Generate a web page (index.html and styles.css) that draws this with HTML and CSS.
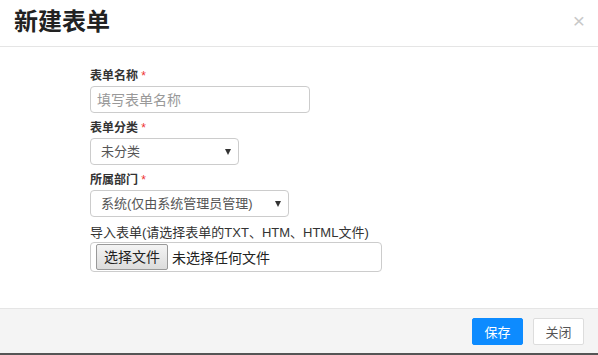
FILE: index.html
```html
<!DOCTYPE html>
<html lang="zh-CN">
<head>
  <meta charset="UTF-8" />
  <title>新建表单</title>
  <link rel="stylesheet" href="styles.css">
</head>
<body>
  <div class="modal">
    <div class="modal-header">
      <h3>新建表单</h3>
      <span class="close">&times;</span>
    </div>
    <div class="modal-body">
      <div class="field">
        <label>表单名称 <em>*</em></label>
        <input class="text-input" type="text" placeholder="填写表单名称">
      </div>
      <div class="field">
        <label>表单分类 <em>*</em></label>
        <div class="select short">未分类<span class="caret"></span></div>
      </div>
      <div class="field">
        <label>所属部门 <em>*</em></label>
        <div class="select wide">系统(仅由系统管理员管理)<span class="caret"></span></div>
      </div>
      <div class="field">
        <label class="plain">导入表单(请选择表单的TXT、HTM、HTML文件)</label>
        <div class="file">
          <span class="file-btn">选择文件</span>
          <span class="file-name">未选择任何文件</span>
        </div>
      </div>
    </div>
    <div class="modal-footer">
      <button class="btn primary">保存</button>
      <button class="btn">关闭</button>
    </div>
  </div>
</body>
</html>
```

FILE: styles.css
```css
* {
  box-sizing: border-box;
  margin: 0;
  padding: 0;
}
body {
  font-family: "Liberation Sans", "Noto Sans CJK SC", sans-serif;
  color: #333;
  background: #fff;
  width: 598px;
  height: 355px;
  overflow: hidden;
}
.modal {
  display: flex;
  flex-direction: column;
  height: 355px;
  border-bottom: 2px solid #555;
}
.modal-header {
  height: 47px;
  border-bottom: 1px solid #e5e5e5;
  display: flex;
  align-items: center;
  justify-content: space-between;
  padding: 0 14px;
}
.modal-header h3 {
  font-size: 24px;
  font-weight: bold;
  color: #222;
  line-height: 1;
  margin-top: -2px;
}
.close {
  font-size: 21px;
  color: #c8c8c8;
  line-height: 1;
  margin-right: -1px;
  margin-top: -6px;
  font-family: "Liberation Sans", sans-serif;
}
.modal-body {
  flex: 1;
  padding: 21px 0 0 90px;
}
.field {
  margin-bottom: 7px;
}
.field label {
  display: block;
  font-size: 12px;
  font-weight: bold;
  line-height: 17px;
  margin-bottom: 1px;
  color: #333;
}
.field label em {
  font-style: normal;
  color: #e33;
  font-weight: normal;
}
.field label.plain {
  font-weight: normal;
  font-size: 13px;
}
.text-input {
  display: block;
  width: 220px;
  height: 27px;
  border: 1px solid #ccc;
  border-radius: 4px;
  padding: 0 6px;
  font-size: 14px;
  font-family: inherit;
  color: #555;
}
.text-input::placeholder {
  color: #999;
}
.select {
  position: relative;
  height: 27px;
  border: 1px solid #ccc;
  border-radius: 4px;
  padding: 0 10px;
  font-size: 13px;
  line-height: 25px;
  color: #555;
}
.select.short {
  width: 149px;
}
.select.wide {
  width: 199px;
}
.caret {
  position: absolute;
  right: 7px;
  top: 10px;
  border-left: 3px solid transparent;
  border-right: 3px solid transparent;
  border-top: 6px solid #333;
}
.file {
  display: flex;
  align-items: center;
  gap: 4px;
  width: 292px;
  height: 30px;
  border: 1px solid #ccc;
  border-radius: 4px;
  padding: 0 5px;
  font-size: 14px;
}
.file-btn {
  background: linear-gradient(#f4f4f4, #dcdcdc);
  border: 1px solid #999;
  border-radius: 2px;
  padding: 0 7px;
  height: 26px;
  line-height: 24px;
  color: #222;
}
.file-name {
  color: #222;
}
.modal-footer {
  height: 45px;
  border-top: 1px solid #e5e5e5;
  background: #f4f4f4;
  display: flex;
  align-items: center;
  justify-content: flex-end;
  gap: 10px;
  padding: 0 14px;
}
.btn {
  width: 51px;
  height: 27px;
  border: 1px solid #ddd;
  border-radius: 2px;
  background: #fff;
  color: #555;
  font-size: 13px;
  font-family: inherit;
}
.btn.primary {
  background: #0d8bff;
  border-color: #0d8bff;
  color: #fff;
}
```
